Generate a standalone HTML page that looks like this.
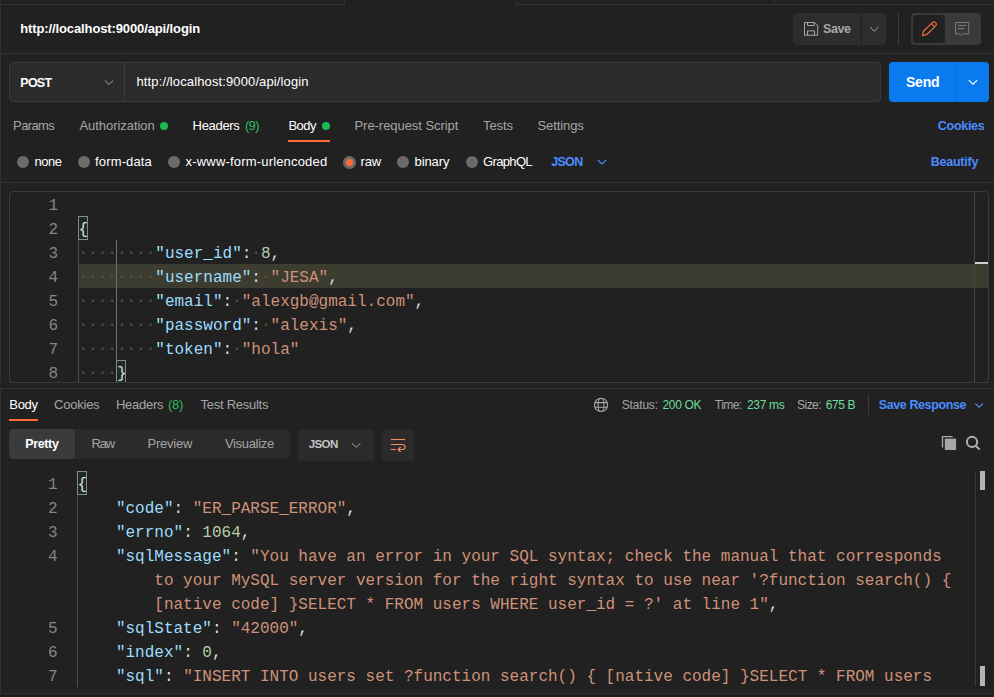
<!DOCTYPE html>
<html><head><meta charset="utf-8"><title>Postman</title>
<style>
html,body{margin:0;padding:0;background:#212121;}
body{width:994px;height:697px;position:relative;overflow:hidden;font-family:"Liberation Sans",sans-serif;}
.a{position:absolute;box-sizing:border-box}
.t{position:absolute;white-space:pre;line-height:1;font-family:"Liberation Sans",sans-serif}
.ln,.cl{position:absolute;white-space:pre;font-family:"Liberation Mono",monospace;font-size:16px;line-height:24px;height:24px}
.ln{color:#858585;text-align:right}
.cl{color:#dcdcdc}
.k{color:#9cdcfe}.s{color:#ce9178}.n{color:#b5cea8}.p{color:#dcdcdc}.w{color:#55554e;position:relative;top:-1px}
.br{position:absolute;box-sizing:border-box;height:24px;width:10px;border:1px solid #888;background:#1f2b22}
svg{position:absolute;overflow:visible}
</style></head><body>
<!-- top tab strip -->
<div class="a" style="left:0;top:4px;width:345px;height:1px;background:#303030"></div>
<div class="a" style="left:516px;top:4px;width:478px;height:1px;background:#303030"></div>
<div class="a" style="left:344px;top:0;width:1px;height:5px;background:#303030"></div>
<div class="a" style="left:516px;top:0;width:1px;height:5px;background:#303030"></div>
<div class="a" style="left:774px;top:0;width:1px;height:4px;background:#303030"></div>
<div class="a" style="left:0;top:0;width:1px;height:694px;background:#303030"></div>
<div class="a" style="left:0;top:693px;width:994px;height:1px;background:#303030;z-index:5"></div>
<div class="a" style="left:0;top:694px;width:994px;height:3px;background:#1f1f1f;z-index:5"></div>
<!-- header -->
<div class="a" style="left:793px;top:13px;width:68px;height:32px;background:#2d2d2d;border-radius:4px 0 0 4px"></div>
<div class="a" style="left:862px;top:13px;width:24px;height:32px;background:#2d2d2d;border-radius:0 4px 4px 0"></div>
<div class="a" style="left:898px;top:13px;width:1px;height:32px;background:#3a3a3a"></div>
<div class="a" style="left:911px;top:13px;width:70px;height:32px;background:#3a3a3a;border-radius:4px"></div>
<div class="a" style="left:913px;top:15px;width:32px;height:28px;background:#212121;border-radius:3px"></div>
<div class="a" style="left:0;top:53px;width:994px;height:1px;background:#333"></div>
<!-- request bar -->
<div class="a" style="left:9px;top:62px;width:872px;height:40px;background:#2b2b2b;border:1px solid #3a3a3a;border-radius:4px"></div>
<div class="a" style="left:124px;top:63px;width:1px;height:38px;background:#3a3a3a"></div>
<div class="a" style="left:889px;top:62px;width:100px;height:40px;background:#0a7bef;border-radius:4px"></div>
<div class="a" style="left:956px;top:62px;width:1px;height:40px;background:#0a6fd6"></div>
<!-- tabs -->
<div class="a" style="left:160px;top:122px;width:8px;height:8px;border-radius:50%;background:#1db954"></div>
<div class="a" style="left:322px;top:122px;width:8px;height:8px;border-radius:50%;background:#1db954"></div>
<div class="a" style="left:288px;top:140px;width:42px;height:2px;background:#ff6c37"></div>
<!-- radios -->
<div class="a rd" style="left:17px;top:156px;width:12px;height:12px;border-radius:50%;background:#6b6b6b"></div>
<div class="a rd" style="left:78px;top:156px;width:12px;height:12px;border-radius:50%;background:#6b6b6b"></div>
<div class="a rd" style="left:168px;top:156px;width:12px;height:12px;border-radius:50%;background:#6b6b6b"></div>
<div class="a rd" style="left:343px;top:156px;width:13px;height:13px;border-radius:50%;background:#ff6c37;border:3px solid #6b6b6b"></div>
<div class="a rd" style="left:397px;top:156px;width:12px;height:12px;border-radius:50%;background:#6b6b6b"></div>
<div class="a rd" style="left:466px;top:156px;width:12px;height:12px;border-radius:50%;background:#6b6b6b"></div>
<div class="a" style="left:0;top:182px;width:994px;height:1px;background:#333"></div>
<!-- request editor -->
<div class="a" style="left:9px;top:191px;width:980px;height:192px;border:1px solid #3a3a3a;border-radius:4px"></div>
<div class="a" style="left:78px;top:264px;width:910px;height:24px;background:#3c3c31"></div>
<div class="a" style="left:974px;top:192px;width:1px;height:190px;background:#444"></div>
<div class="a" style="left:975px;top:262px;width:13px;height:2px;background:#d0d0d0"></div>
<div class="a" style="left:78px;top:240px;width:1px;height:142px;background:#4c4c4c"></div>
<div class="a" style="left:116px;top:240px;width:1px;height:120px;background:#707070"></div>
<div class="br" style="left:78px;top:216px"></div><div class="br" style="left:116px;top:360px"></div>
<div class="ln" style="top:194px;left:18px;width:40px">1</div><div class="cl" style="top:194px;left:78.5px"></div>
<div class="ln" style="top:218px;left:18px;width:40px">2</div><div class="cl" style="top:218px;left:78.5px"><span class="p">{</span></div>
<div class="ln" style="top:242px;left:18px;width:40px">3</div><div class="cl" style="top:242px;left:78.5px"><span class="w">········</span><span class="k">&quot;user_id&quot;</span><span class="p">:</span><span class="w">·</span><span class="n">8</span><span class="p">,</span></div>
<div class="ln" style="top:266px;left:18px;width:40px">4</div><div class="cl" style="top:266px;left:78.5px"><span class="w">········</span><span class="k">&quot;username&quot;</span><span class="p">:</span><span class="w">·</span><span class="s">&quot;JESA&quot;</span><span class="p">,</span></div>
<div class="ln" style="top:290px;left:18px;width:40px">5</div><div class="cl" style="top:290px;left:78.5px"><span class="w">········</span><span class="k">&quot;email&quot;</span><span class="p">:</span><span class="w">·</span><span class="s">&quot;alexgb@gmail.com&quot;</span><span class="p">,</span></div>
<div class="ln" style="top:314px;left:18px;width:40px">6</div><div class="cl" style="top:314px;left:78.5px"><span class="w">········</span><span class="k">&quot;password&quot;</span><span class="p">:</span><span class="w">·</span><span class="s">&quot;alexis&quot;</span><span class="p">,</span></div>
<div class="ln" style="top:338px;left:18px;width:40px">7</div><div class="cl" style="top:338px;left:78.5px"><span class="w">········</span><span class="k">&quot;token&quot;</span><span class="p">:</span><span class="w">·</span><span class="s">&quot;hola&quot;</span></div>
<div class="ln" style="top:362px;left:18px;width:40px">8</div><div class="cl" style="top:362px;left:78.5px"><span class="w">····</span><span class="p">}</span></div>

<div class="a" style="left:0;top:383px;width:994px;height:5px;background:#212121"></div>
<div class="a" style="left:10px;top:382px;width:978px;height:1px;background:#3a3a3a"></div>
<!-- response -->
<div class="a" style="left:0;top:388px;width:994px;height:1px;background:#333"></div>
<div class="a" style="left:9px;top:419px;width:29px;height:2px;background:#ff6c37"></div>
<div class="a" style="left:868px;top:395px;width:1px;height:20px;background:#3a3a3a"></div>
<div class="a" style="left:9px;top:429px;width:281px;height:30px;background:#2b2b2b;border-radius:4px"></div>
<div class="a" style="left:9px;top:429px;width:66px;height:30px;background:#3a3a3a;border-radius:4px 0 0 4px"></div>
<div class="a" style="left:298px;top:429px;width:76px;height:32px;background:#2b2b2b;border-radius:4px"></div>
<div class="a" style="left:382px;top:429px;width:32px;height:32px;background:#2b2b2b;border-radius:4px"></div>
<div class="a" style="left:77px;top:495px;width:1px;height:192px;background:#4c4c4c"></div>
<div class="a" style="left:975px;top:471px;width:1px;height:215px;background:#3a3a3a"></div>
<div class="a" style="left:980px;top:471px;width:5px;height:19px;background:#b4b4b4"></div>
<div class="a" style="left:980px;top:666px;width:5px;height:20px;background:#b4b4b4"></div>
<div class="br" style="left:77px;top:471px"></div>
<div class="ln" style="top:473px;left:17.5px;width:40px">1</div><div class="cl" style="top:473px;left:77.5px"><span class="p">{</span></div>
<div class="ln" style="top:497px;left:17.5px;width:40px">2</div><div class="cl" style="top:497px;left:77.5px">    <span class="k">&quot;code&quot;</span><span class="p">: </span><span class="s">&quot;ER_PARSE_ERROR&quot;</span><span class="p">,</span></div>
<div class="ln" style="top:521px;left:17.5px;width:40px">3</div><div class="cl" style="top:521px;left:77.5px">    <span class="k">&quot;errno&quot;</span><span class="p">: </span><span class="n">1064</span><span class="p">,</span></div>
<div class="ln" style="top:545px;left:17.5px;width:40px">4</div><div class="cl" style="top:545px;left:77.5px">    <span class="k">&quot;sqlMessage&quot;</span><span class="p">: </span><span class="s">&quot;You have an error in your SQL syntax; check the manual that corresponds</span></div>
<div class="ln" style="top:569px;left:17.5px;width:40px"></div><div class="cl" style="top:569px;left:77.5px">        <span class="s">to your MySQL server version for the right syntax to use near &#x27;?function search() {</span></div>
<div class="ln" style="top:593px;left:17.5px;width:40px"></div><div class="cl" style="top:593px;left:77.5px">        <span class="s">[native code] }SELECT * FROM users WHERE user_id = ?&#x27; at line 1&quot;</span><span class="p">,</span></div>
<div class="ln" style="top:617px;left:17.5px;width:40px">5</div><div class="cl" style="top:617px;left:77.5px">    <span class="k">&quot;sqlState&quot;</span><span class="p">: </span><span class="s">&quot;42000&quot;</span><span class="p">,</span></div>
<div class="ln" style="top:641px;left:17.5px;width:40px">6</div><div class="cl" style="top:641px;left:77.5px">    <span class="k">&quot;index&quot;</span><span class="p">: </span><span class="n">0</span><span class="p">,</span></div>
<div class="ln" style="top:665px;left:17.5px;width:40px">7</div><div class="cl" style="top:665px;left:77.5px">    <span class="k">&quot;sql&quot;</span><span class="p">: </span><span class="s">&quot;INSERT INTO users set ?function search() { [native code] }SELECT * FROM users</span></div>

<svg width="994" height="697" viewBox="0 0 994 697" style="left:0;top:0" fill="none" stroke-linecap="butt">
<!-- save icon -->
<path d="M804.5 22.5h10.2l3 3v9.7h-13.2z M807.5 22.5v3h6.6v-3 M807.5 35.2v-4.3h7v4.3" stroke="#a6a6a6" stroke-width="1"/>
<!-- chevrons -->
<path d="M870 27.2l4.2 4 4.2-4" stroke="#a6a6a6" stroke-width="1"/>
<path d="M105 80.4l4.1 4 4.1-4" stroke="#a6a6a6" stroke-width="1"/>
<path d="M968.8 80.2l4.2 4 4.2-4" stroke="#ffffff" stroke-width="1.15"/>
<path d="M597.8 160l4.2 4 4.2-4" stroke="#4a8dff" stroke-width="1.15"/>
<path d="M975.2 403.3l4 3.9 4-3.9" stroke="#4a8dff" stroke-width="1.15"/>
<path d="M352 443.3l4.2 4 4.2-4" stroke="#a6a6a6" stroke-width="1"/>
<!-- pencil -->
<g stroke="#e9703c" stroke-width="1.2" stroke-linejoin="round">
<path d="M922.3 35.7l1-4.2 9.3-9.1a1.9 1.9 0 0 1 2.7 0l0.5 0.5a1.9 1.9 0 0 1 0 2.7l-9.3 9.1z"/>
<path d="M931.4 23.6l3.2 3.2"/>
</g>
<!-- comment -->
<g stroke="#7d7d7d" stroke-width="1">
<path d="M955.5 22.5h13.2v11.3h-6.5l-1.6 1.4-1.6-1.4h-3.5z"/>
<path d="M958 25.5h8 M958 28.6h6"/>
</g>
<!-- globe -->
<g stroke="#a6a6a6" stroke-width="1.1">
<circle cx="601.05" cy="404.9" r="6.6"/>
<ellipse cx="601.05" cy="404.9" rx="3" ry="6.6"/>
<path d="M595 402.6h12.1 M595 407.2h12.1"/>
</g>
<!-- wrap -->
<g stroke="#f68c5e" stroke-width="1.1">
<path d="M390.8 439.5h14.3"/>
<path d="M390.8 444.5h11.7a2.5 2.5 0 0 1 0 5h-4.3"/>
<path d="M390.8 449.5h5.3"/>
<path d="M400.6 447l-2.5 2.5 2.5 2.5"/>
</g>
<!-- copy -->
<path d="M942.5 447.4v-10.8h10.1" stroke="#a6a6a6" stroke-width="1.4"/>
<rect x="944.8" y="438.6" width="11.3" height="11.4" fill="#a6a6a6" stroke="none"/>
<!-- search -->
<circle cx="972.05" cy="441.95" r="5.1" stroke="#b0b0b0" stroke-width="2"/>
<path d="M975.7 445.7l4 3.9" stroke="#b0b0b0" stroke-width="2"/>
</svg>

<span class="t" style="left:20.3px;top:22.2px;font-size:13px;font-weight:700;color:#ffffff;letter-spacing:-0.12px">http://localhost:9000/api/login</span>
<span class="t" style="left:823.1px;top:23.4px;font-size:12.5px;font-weight:700;color:#a6a6a6;letter-spacing:-0.43px">Save</span>
<span class="t" style="left:20.3px;top:77.4px;font-size:12.5px;font-weight:700;color:#ffffff;letter-spacing:-0.75px">POST</span>
<span class="t" style="left:136.5px;top:75.0px;font-size:13px;font-weight:400;color:#ffffff;letter-spacing:0.12px">http://localhost:9000/api/login</span>
<span class="t" style="left:905.9px;top:74.9px;font-size:14px;font-weight:700;color:#ffffff;letter-spacing:-0.18px">Send</span>
<span class="t" style="left:13.1px;top:119.1px;font-size:13px;font-weight:400;color:#a6a6a6;letter-spacing:-0.62px">Params</span>
<span class="t" style="left:79.5px;top:119.1px;font-size:13px;font-weight:400;color:#a6a6a6;letter-spacing:-0.06px">Authorization</span>
<span class="t" style="left:192.6px;top:119.1px;font-size:13px;font-weight:400;color:#ffffff;letter-spacing:-0.31px">Headers</span>
<span class="t" style="left:244.9px;top:119.1px;font-size:13px;font-weight:400;color:#2fbf62;letter-spacing:-0.65px">(9)</span>
<span class="t" style="left:288.4px;top:119.1px;font-size:13px;font-weight:400;color:#ffffff;letter-spacing:-0.48px">Body</span>
<span class="t" style="left:354.5px;top:119.1px;font-size:13px;font-weight:400;color:#a6a6a6;letter-spacing:-0.05px">Pre-request Script</span>
<span class="t" style="left:483.1px;top:119.1px;font-size:13px;font-weight:400;color:#a6a6a6;letter-spacing:-0.11px">Tests</span>
<span class="t" style="left:537.4px;top:119.1px;font-size:13px;font-weight:400;color:#a6a6a6;letter-spacing:-0.07px">Settings</span>
<span class="t" style="left:937.8px;top:119.5px;font-size:12.5px;font-weight:700;color:#4a8dff;letter-spacing:-0.29px">Cookies</span>
<span class="t" style="left:34.5px;top:155.3px;font-size:13px;font-weight:400;color:#ffffff;letter-spacing:-0.51px">none</span>
<span class="t" style="left:95.1px;top:155.3px;font-size:13px;font-weight:400;color:#ffffff;letter-spacing:0.14px">form-data</span>
<span class="t" style="left:185.6px;top:155.3px;font-size:13px;font-weight:400;color:#ffffff;letter-spacing:0.18px">x-www-form-urlencoded</span>
<span class="t" style="left:360.6px;top:155.3px;font-size:13px;font-weight:400;color:#ffffff;letter-spacing:-0.18px">raw</span>
<span class="t" style="left:414.6px;top:155.3px;font-size:13px;font-weight:400;color:#ffffff;letter-spacing:-0.12px">binary</span>
<span class="t" style="left:483.0px;top:155.3px;font-size:13px;font-weight:400;color:#ffffff;letter-spacing:-0.65px">GraphQL</span>
<span class="t" style="left:551.2px;top:155.7px;font-size:12.5px;font-weight:700;color:#4a8dff;letter-spacing:-0.68px">JSON</span>
<span class="t" style="left:930.7px;top:156.2px;font-size:12.5px;font-weight:700;color:#4a8dff;letter-spacing:-0.22px">Beautify</span>
<span class="t" style="left:9.3px;top:398.4px;font-size:13px;font-weight:400;color:#ffffff;letter-spacing:-0.31px">Body</span>
<span class="t" style="left:54.1px;top:398.4px;font-size:13px;font-weight:400;color:#a6a6a6;letter-spacing:-0.24px">Cookies</span>
<span class="t" style="left:116.0px;top:398.4px;font-size:13px;font-weight:400;color:#a6a6a6;letter-spacing:-0.27px">Headers</span>
<span class="t" style="left:168.0px;top:398.4px;font-size:13px;font-weight:400;color:#2fbf62;letter-spacing:-0.25px">(8)</span>
<span class="t" style="left:200.5px;top:398.4px;font-size:13px;font-weight:400;color:#a6a6a6;letter-spacing:-0.26px">Test Results</span>
<span class="t" style="left:621.8px;top:398.9px;font-size:12px;font-weight:400;color:#a6a6a6;letter-spacing:-0.19px">Status:</span>
<span class="t" style="left:662.5px;top:398.9px;font-size:12px;font-weight:400;color:#6bdd9a;letter-spacing:-0.34px">200 OK</span>
<span class="t" style="left:714.8px;top:398.9px;font-size:12px;font-weight:400;color:#a6a6a6;letter-spacing:-0.54px">Time:</span>
<span class="t" style="left:747.0px;top:398.9px;font-size:12px;font-weight:400;color:#6bdd9a;letter-spacing:-0.33px">237 ms</span>
<span class="t" style="left:797.1px;top:398.9px;font-size:12px;font-weight:400;color:#a6a6a6;letter-spacing:-0.55px">Size:</span>
<span class="t" style="left:825.8px;top:398.9px;font-size:12px;font-weight:400;color:#6bdd9a;letter-spacing:-0.44px">675 B</span>
<span class="t" style="left:878.7px;top:398.7px;font-size:12.5px;font-weight:700;color:#4a8dff;letter-spacing:-0.39px">Save Response</span>
<span class="t" style="left:25.2px;top:437.8px;font-size:12.5px;font-weight:700;color:#ffffff;letter-spacing:-0.35px">Pretty</span>
<span class="t" style="left:91.5px;top:437.4px;font-size:13px;font-weight:400;color:#a6a6a6;letter-spacing:-1.16px">Raw</span>
<span class="t" style="left:147.6px;top:437.4px;font-size:13px;font-weight:400;color:#a6a6a6;letter-spacing:-0.24px">Preview</span>
<span class="t" style="left:224.9px;top:437.4px;font-size:13px;font-weight:400;color:#a6a6a6;letter-spacing:-0.31px">Visualize</span>
<span class="t" style="left:308.7px;top:439.4px;font-size:11.5px;font-weight:700;color:#c4c4c4;letter-spacing:-0.58px">JSON</span>
</body></html>
